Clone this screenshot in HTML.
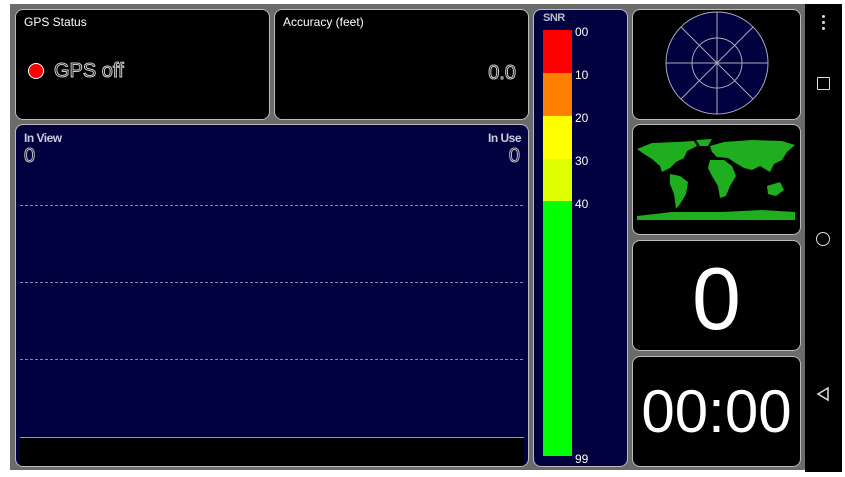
<!DOCTYPE html>
<html><head><style>
body{margin:0;width:845px;height:477px;background:#fff;position:relative;overflow:hidden;font-family:"Liberation Sans",sans-serif}
.bg{position:absolute;left:10px;top:4px;width:796px;height:466px;background:#6b6b6b}
.nav{position:absolute;left:805px;top:4px;width:37px;height:468px;background:#000}
.p{position:absolute;border:1.5px solid #bbb;border-radius:8px;background:#000;box-sizing:border-box;overflow:hidden}
.blue{background:#01013f}
.t{position:absolute;color:#fff;font-size:12px}
</style></head><body>
<div class="bg"></div>
<div class="nav">
 <div style="position:absolute;left:17px;top:11px;width:3px;height:3px;background:#ddd;border-radius:2px;box-shadow:0 6px 0 #ddd,0 12px 0 #ddd"></div>
 <div style="position:absolute;left:12px;top:73px;width:11px;height:11px;border:1.5px solid #ddd;border-radius:1px"></div>
 <div style="position:absolute;left:11px;top:228px;width:12px;height:12px;border:1.5px solid #ddd;border-radius:50%"></div>
 <svg style="position:absolute;left:10px;top:382px" width="16" height="16"><path d="M13 2 L3 8 L13 14 Z" fill="none" stroke="#ddd" stroke-width="1.5"/></svg>
</div>

<div class="p" style="left:15px;top:9px;width:255px;height:111px">
 <div class="t" style="left:8px;top:5px">GPS Status</div>
 <div style="position:absolute;left:12px;top:53px;width:16px;height:16px;border-radius:50%;background:#f00;border:1px solid #fff;box-sizing:border-box"></div>
 <div class="t" style="left:38px;top:50px;font-size:20px;color:#000;-webkit-text-stroke:1px #ccc">GPS off</div>
</div>
<div class="p" style="left:274px;top:9px;width:255px;height:111px">
 <div class="t" style="left:8px;top:5px">Accuracy (feet)</div>
 <div class="t" style="right:12px;top:52px;font-size:20px;color:#000;-webkit-text-stroke:1px #ccc">0.0</div>
</div>
<div class="p blue" style="left:15px;top:124px;width:514px;height:343px">
 <div class="t" style="left:8px;top:6px;font-weight:bold;color:#ccd;letter-spacing:-0.5px">In View</div>
 <div class="t" style="right:7px;top:6px;font-weight:bold;color:#ccd;letter-spacing:-0.5px">In Use</div>
 <div class="t" style="left:8px;top:20px;font-size:20px;color:transparent;-webkit-text-stroke:1px #bbb">0</div>
 <div class="t" style="right:8px;top:20px;font-size:20px;color:transparent;-webkit-text-stroke:1px #bbb">0</div>
 <div style="position:absolute;left:4px;right:5px;top:80px;border-top:1px dashed #8888bb"></div>
 <div style="position:absolute;left:4px;right:5px;top:157px;border-top:1px dashed #8888bb"></div>
 <div style="position:absolute;left:4px;right:5px;top:234px;border-top:1px dashed #8888bb"></div>
 <div style="position:absolute;left:4px;right:4px;top:312px;height:30px;background:#000;border-top:1px solid #999"></div>
</div>
<div class="p blue" style="left:533px;top:9px;width:95px;height:458px">
 <div class="t" style="left:9px;top:2px;font-size:11px;font-weight:bold;color:#bbc;letter-spacing:-0.5px">SNR</div>
 <div style="position:absolute;left:9px;top:20px;width:29px;height:43px;background:#f00"></div>
 <div style="position:absolute;left:9px;top:63px;width:29px;height:43px;background:#ff7f00"></div>
 <div style="position:absolute;left:9px;top:106px;width:29px;height:43px;background:#ff0"></div>
 <div style="position:absolute;left:9px;top:149px;width:29px;height:42px;background:#dfff00"></div>
 <div style="position:absolute;left:9px;top:191px;width:29px;height:255px;background:#0f0"></div>
 <div class="t" style="left:41px;top:15px">00</div>
 <div class="t" style="left:41px;top:58px">10</div>
 <div class="t" style="left:41px;top:101px">20</div>
 <div class="t" style="left:41px;top:144px">30</div>
 <div class="t" style="left:41px;top:187px">40</div>
 <div class="t" style="left:41px;top:442px">99</div>
</div>
<div class="p" style="left:632px;top:9px;width:169px;height:111px">
 <svg width="169" height="111" style="position:absolute;left:-1.5px;top:-1.5px">
  <g stroke="#aab" stroke-width="1" fill="none">
   <circle cx="85" cy="54" r="51" fill="#01013f"/>
   <circle cx="85" cy="54" r="25"/>
   <line x1="34" y1="54" x2="136" y2="54"/><line x1="85" y1="3" x2="85" y2="105"/>
   <line x1="49" y1="18" x2="121" y2="90"/><line x1="121" y1="18" x2="49" y2="90"/>
  </g></svg>
</div>
<div class="p" style="left:632px;top:124px;width:169px;height:111px">
 <svg width="169" height="111" style="position:absolute;left:-1.5px;top:-1.5px"><g fill="#1eae1e">
  <path d="M5 25 L20 19 L45 18 L62 17 L65 22 L55 27 L52 34 L44 38 L38 44 L30 48 L28 42 L20 35 L12 30 Z"/>
  <path d="M64 16 L80 15 L76 22 L68 22 Z"/>
  <path d="M38 50 L48 52 L56 58 L54 70 L48 80 L44 85 L42 70 L38 60 Z"/>
  <path d="M78 22 L92 18 L120 16 L150 17 L163 21 L155 28 L150 36 L142 40 L138 48 L128 42 L120 46 L112 44 L102 38 L96 34 L85 33 L80 28 Z"/>
  <path d="M78 36 L92 36 L100 42 L104 52 L98 62 L94 72 L88 74 L86 62 L80 52 L76 44 Z"/>
  <path d="M135 62 L148 58 L152 66 L144 72 L136 70 Z"/>
  <path d="M5 92 L40 88 L90 88 L130 86 L163 88 L163 96 L5 96 Z"/>
 </g></svg>
</div>
<div class="p" style="left:632px;top:240px;width:169px;height:111px">
 <div class="t" style="left:0;right:0;text-align:center;top:8px;font-size:88px;line-height:100px">0</div>
</div>
<div class="p" style="left:632px;top:356px;width:169px;height:111px">
 <div class="t" style="left:0;right:0;text-align:center;top:20px;font-size:60px;line-height:70px">00:00</div>
</div>
</body></html>
